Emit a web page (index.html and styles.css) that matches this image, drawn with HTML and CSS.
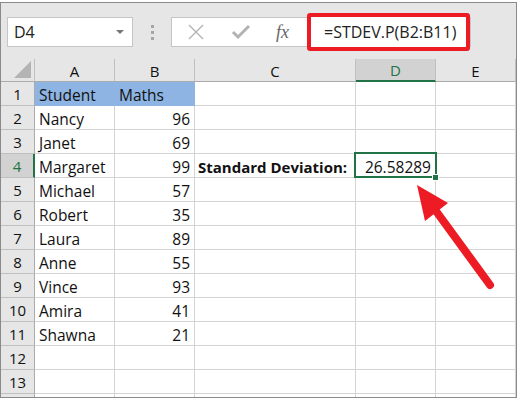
FILE: index.html
```html
<!DOCTYPE html>
<html lang="en">
<head>
  <meta charset="UTF-8">
  <title>STDEV.P</title>
  <link rel="stylesheet" href="styles.css">
</head>
<body>
<div class="window">
  <div class="formula-bar">
    <div class="name-box">
      <span>D4</span>
      <span class="caret"></span>
    </div>
    <div class="dots"><i></i><i></i><i></i></div>
    <div class="formula-box">
      <div class="fx-icons">
        <svg class="ico" width="18" height="18" viewBox="0 0 18 18"><path d="M2 2 L16 16 M16 2 L2 16" stroke="#b3b3b3" stroke-width="1.4" fill="none"/></svg>
        <svg class="ico" width="20" height="18" viewBox="0 0 20 18"><path d="M2 9 L7 14 L18 3" stroke="#b3b3b3" stroke-width="3" fill="none"/></svg>
        <span class="fx">fx</span>
      </div>
      <div class="formula">=STDEV.P(B2:B11)</div>
    </div>
  </div>

  <div class="sheet">
    <div class="hd corner"><span class="tri"></span></div>
    <div class="hd">A</div>
    <div class="hd">B</div>
    <div class="hd">C</div>
    <div class="hd active">D</div>
    <div class="hd">E</div>

    <div class="rh">1</div><div class="c fill">Student</div><div class="c fill">Maths</div><div class="c"></div><div class="c"></div><div class="c"></div>
    <div class="rh">2</div><div class="c">Nancy</div><div class="c num">96</div><div class="c"></div><div class="c"></div><div class="c"></div>
    <div class="rh">3</div><div class="c">Janet</div><div class="c num">69</div><div class="c"></div><div class="c"></div><div class="c"></div>
    <div class="rh active">4</div><div class="c">Margaret</div><div class="c num">99</div><div class="c bold">Standard Deviation:</div><div class="c num selected">26.58289</div><div class="c"></div>
    <div class="rh">5</div><div class="c">Michael</div><div class="c num">57</div><div class="c"></div><div class="c"></div><div class="c"></div>
    <div class="rh">6</div><div class="c">Robert</div><div class="c num">35</div><div class="c"></div><div class="c"></div><div class="c"></div>
    <div class="rh">7</div><div class="c">Laura</div><div class="c num">89</div><div class="c"></div><div class="c"></div><div class="c"></div>
    <div class="rh">8</div><div class="c">Anne</div><div class="c num">55</div><div class="c"></div><div class="c"></div><div class="c"></div>
    <div class="rh">9</div><div class="c">Vince</div><div class="c num">93</div><div class="c"></div><div class="c"></div><div class="c"></div>
    <div class="rh">10</div><div class="c">Amira</div><div class="c num">41</div><div class="c"></div><div class="c"></div><div class="c"></div>
    <div class="rh">11</div><div class="c">Shawna</div><div class="c num">21</div><div class="c"></div><div class="c"></div><div class="c"></div>
    <div class="rh">12</div><div class="c"></div><div class="c"></div><div class="c"></div><div class="c"></div><div class="c"></div>
    <div class="rh">13</div><div class="c"></div><div class="c"></div><div class="c"></div><div class="c"></div><div class="c"></div>
    <div class="rh"></div><div class="c"></div><div class="c"></div><div class="c"></div><div class="c"></div><div class="c"></div>
  </div>

  <!-- annotation arrow -->
  <svg class="arrow" width="517" height="398" viewBox="0 0 517 398">
    <line x1="490" y1="285" x2="436" y2="211" stroke="#ed1c24" stroke-width="8" stroke-linecap="round"/>
    <polygon points="417,185 425,221 448,203" fill="#ed1c24"/>
  </svg>
</div>
</body>
</html>
```

FILE: styles.css
```css
body {
  margin: 0;
  background: #fff;
  font-family: "Open Sans", "Liberation Sans", sans-serif;
  overflow: hidden;
}

.window {
  position: relative;
  margin-top: 2px;
  width: 517px;
  height: 396px;
  box-sizing: border-box;
  border: 1px solid #8a8a8a;
  overflow: hidden;
}

.formula-bar {
  height: 56px;
  background: #e6e6e6;
  display: flex;
  align-items: flex-start;
  padding: 14px 0 0 6px;
  box-sizing: border-box;
}

.name-box {
  width: 126px;
  height: 30px;
  box-sizing: border-box;
  background: #fff;
  border: 1px solid #c6c6c6;
  display: flex;
  align-items: center;
  justify-content: space-between;
  padding: 0 8px 0 6px;
  font-size: 16px;
  color: #222;
}

.caret {
  width: 0;
  height: 0;
  border-left: 4px solid transparent;
  border-right: 4px solid transparent;
  border-top: 4px solid #777;
}

.dots {
  width: 38px;
  height: 30px;
  display: flex;
  flex-direction: column;
  align-items: center;
  justify-content: center;
  gap: 3px;
}

.dots i {
  width: 3px;
  height: 3px;
  background: #a6a6a6;
}

.formula-box {
  width: 300px;
  height: 30px;
  box-sizing: border-box;
  background: #fff;
  border: 1px solid #c6c6c6;
  display: flex;
  align-items: center;
}

.fx-icons {
  width: 138px;
  display: flex;
  align-items: center;
  padding-left: 15px;
  box-sizing: border-box;
}

.fx-icons .ico {
  margin-right: 26px;
}

.fx {
  font-family: "Liberation Serif", serif;
  font-style: italic;
  font-size: 18px;
  color: #666;
  margin-left: -1px;
}

.formula {
  height: 38px;
  width: 163px;
  flex-shrink: 0;
  box-sizing: border-box;
  border: 4px solid #ed1c24;
  border-radius: 3px;
  background: #fff;
  display: flex;
  align-items: center;
  padding-left: 13px;
  font-size: 16px;
  color: #222;
}

.sheet {
  display: grid;
  grid-template-columns: 34px 80px 80px 161px 80px 80px;
  grid-template-rows: 23px;
  grid-auto-rows: 24px;
  font-size: 15.5px;
  color: #111;
}

.hd {
  background: #e6e6e6;
  border-right: 1px solid #c0c0c0;
  border-bottom: 1px solid #ababab;
  display: flex;
  align-items: center;
  justify-content: center;
  font-size: 15px;
  color: #111;
  padding-top: 1px;
}

.hd.active {
  background: #d2d2d2;
  color: #217346;
  border-bottom: 2px solid #217346;
}

.corner {
  position: relative;
}

.tri {
  position: absolute;
  right: 3px;
  bottom: 3px;
  width: 0;
  height: 0;
  border-left: 17px solid transparent;
  border-bottom: 17px solid #b4b4b4;
}

.rh {
  background: #e6e6e6;
  border-right: 1px solid #ababab;
  border-bottom: 1px solid #c0c0c0;
  display: flex;
  align-items: center;
  justify-content: center;
  font-size: 15px;
  color: #111;
  padding-top: 1px;
}

.rh.active {
  background: #d2d2d2;
  color: #217346;
  border-right: 2px solid #217346;
}

.c {
  border-right: 1px solid #d4d4d4;
  border-bottom: 1px solid #d4d4d4;
  display: flex;
  align-items: center;
  padding: 2px 4px 0;
  white-space: nowrap;
  position: relative;
}

.c.fill {
  background: #8db4e2;
  border-right-color: #8db4e2;
  border-bottom-color: #8db4e2;
}

.c.num {
  justify-content: flex-end;
}

.c.bold {
  font-weight: bold;
  font-size: 15px;
  padding-left: 3px;
  overflow: visible;
}

.c.selected::after {
  content: "";
  position: absolute;
  left: -2px;
  top: -2px;
  right: -2px;
  bottom: -1px;
  border: 2px solid #217346;
}

.c.selected::before {
  content: "";
  position: absolute;
  right: -4px;
  bottom: -4px;
  width: 5px;
  height: 5px;
  background: #217346;
  border: 1px solid #fff;
  z-index: 2;
}

.arrow {
  position: absolute;
  left: -1px;
  top: -3px;
  pointer-events: none;
}
```
